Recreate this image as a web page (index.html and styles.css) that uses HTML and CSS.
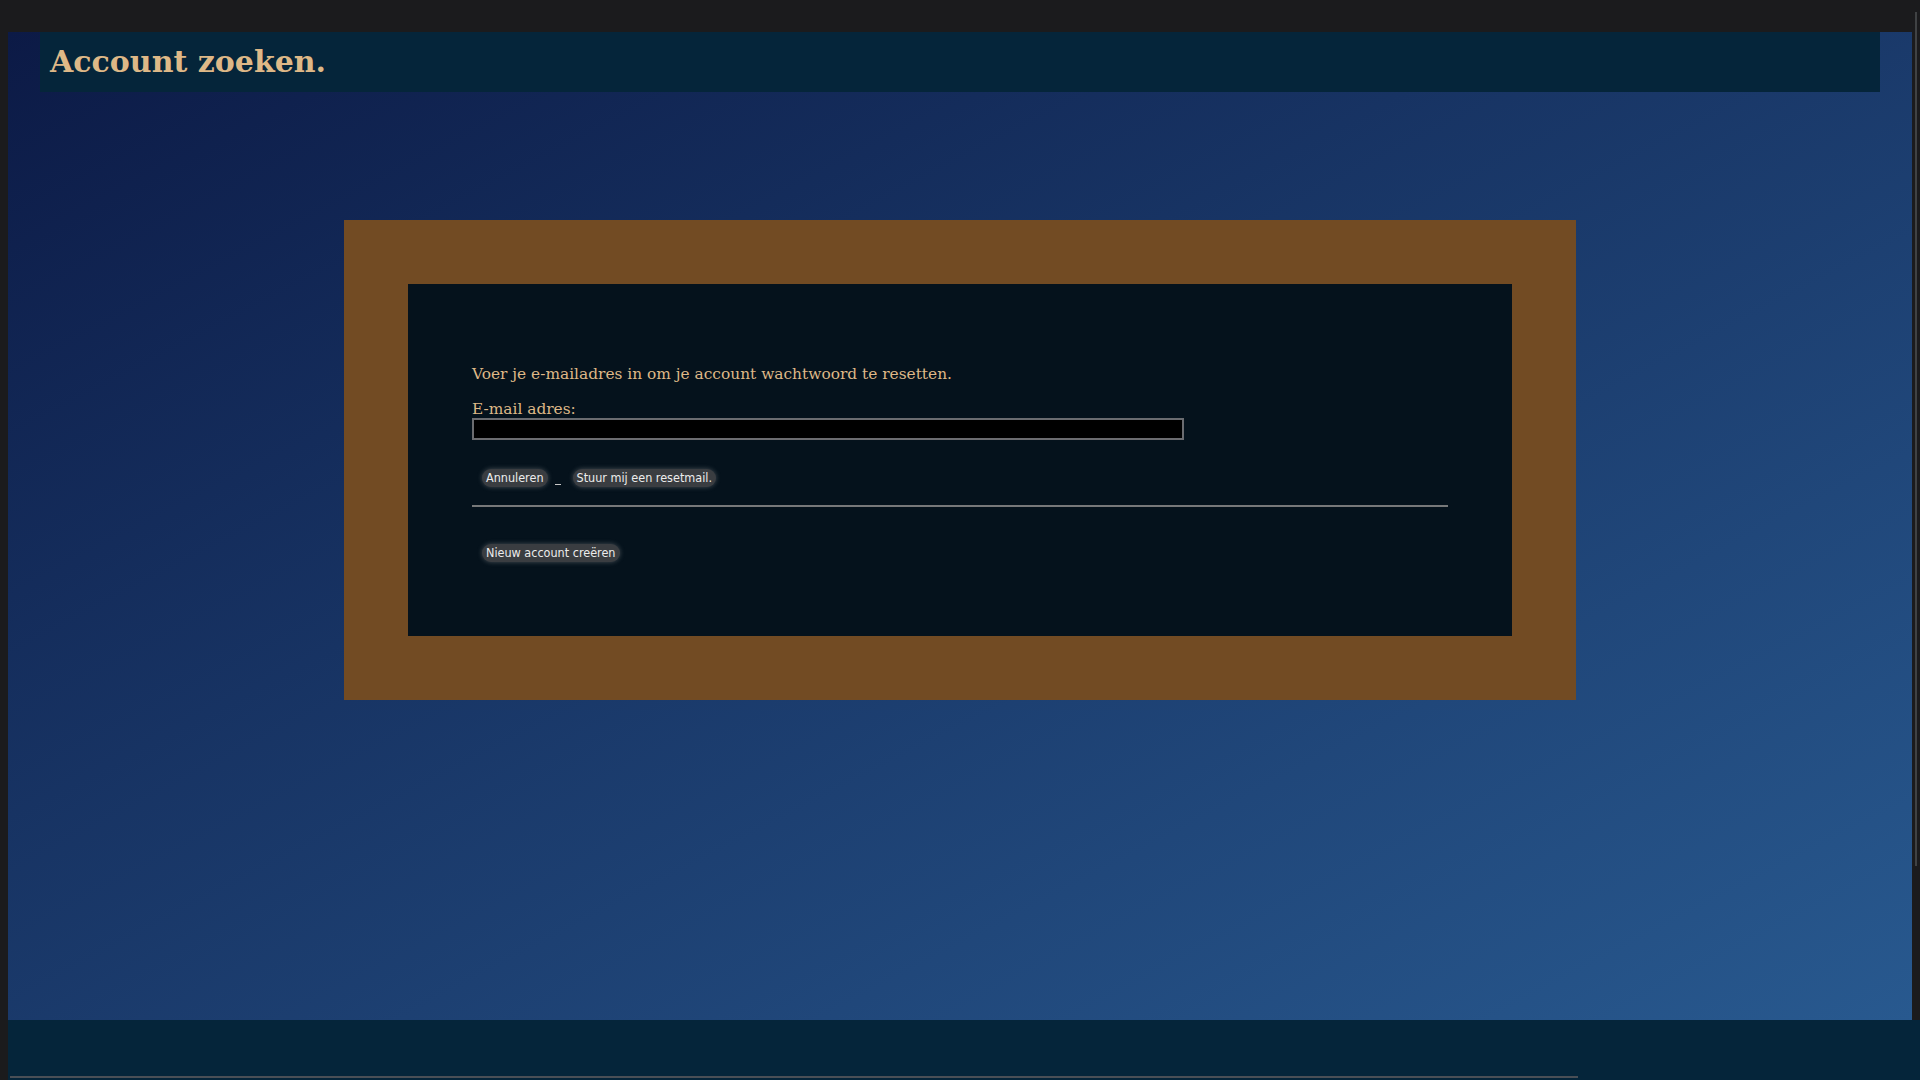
FILE: index.html
```html
<!DOCTYPE html>
<html lang="nl">
<head>
<meta charset="utf-8">
<title>Account zoeken</title>
<link rel="stylesheet" href="styles.css">
</head>
<body>
<div class="page">
  <header class="topbar">
    <h1 class="title">Account zoeken.</h1>
  </header>
  <section class="frame">
    <div class="card">
      <p class="intro">Voer je e-mailadres in om je account wachtwoord te resetten.</p>
      <label class="label" for="email">E-mail adres:</label>
      <input class="field" id="email" type="text">
      <div class="actions">
        <button class="btn">Annuleren</button>
        <span class="sep"></span>
        <button class="btn">Stuur mij een resetmail.</button>
      </div>
      <div class="rule"></div>
      <div class="actions second">
        <button class="btn">Nieuw account creëren</button>
      </div>
    </div>
  </section>
</div>
<footer class="footer">
  <div class="footer-line"></div>
</footer>
<div class="scrollbar"></div>
</body>
</html>
```
FILE: styles.css
```css
html {
  background: #1b1b1d;
  height: 100%;
  overflow: hidden;
}
body {
  margin: 0;
  padding: 32px 0 0 8px;
  overflow: hidden;
  height: 1080px;
  box-sizing: border-box;
}
.page {
  width: 1904px;
  height: 988px;
  background: linear-gradient(to bottom right, #0c1a46, #28598f);
  display: flex;
  flex-direction: column;
  align-items: center;
}
.topbar {
  align-self: stretch;
  margin: 0 32px;
  height: 60px;
  background: #05253a;
}
.title {
  margin: 0;
  padding-left: 10px;
  font-family: "DejaVu Serif", serif;
  font-weight: bold;
  font-size: 30px;
  line-height: 60px;
  color: #deb887;
}
.frame {
  margin-top: 128px;
  width: 1232px;
  padding: 64px;
  box-sizing: border-box;
  background: #724b23;
}
.card {
  background: #05121c;
  padding: 64px;
  display: flex;
  flex-direction: column;
  align-items: flex-start;
}
.intro {
  margin: 16px 0;
  font-family: "DejaVu Serif", serif;
  font-size: 15.4px;
  line-height: 20px;
  color: #deb887;
}
.label {
  display: block;
  font-family: "DejaVu Serif", serif;
  font-size: 15.4px;
  line-height: 18px;
  color: #deb887;
}
.field {
  width: 712px;
  height: 22px;
  box-sizing: border-box;
  margin: 0;
  background: #000;
  border: 2px solid #6b6c70;
  outline: none;
}
.actions {
  margin-top: 29px;
  padding-left: 10px;
  display: flex;
  align-items: center;
  height: 18px;
}
.actions.second {
  margin-top: 37px;
  margin-bottom: 10px;
}
.btn {
  height: 18px;
  padding: 0 4px;
  margin: 0;
  border: none;
  border-radius: 9px;
  background: #3a3d41;
  color: #ececec;
  font-family: "DejaVu Sans Condensed", "DejaVu Sans", sans-serif;
  font-stretch: condensed;
  font-size: 12.5px;
  line-height: 18px;
  box-shadow: 0 0 5px rgba(190, 190, 190, 0.35);
}
.sep {
  width: 6px;
  height: 1px;
  margin: 12px 12px 0 7px;
  background: #c8c8c8;
}
.rule {
  margin-top: 18px;
  width: 976px;
  height: 2px;
  background: #777879;
}
.footer {
  margin-left: 0;
  width: 1912px;
  height: 60px;
  background: #05253a;
  padding-top: 56px;
  box-sizing: border-box;
}
.footer-line {
  margin-left: 2px;
  width: 1568px;
  height: 2px;
  background: #4a4f56;
}
.scrollbar {
  position: fixed;
  left: 1915px;
  top: 12px;
  width: 2px;
  height: 854px;
  background: #404244;
}
```
